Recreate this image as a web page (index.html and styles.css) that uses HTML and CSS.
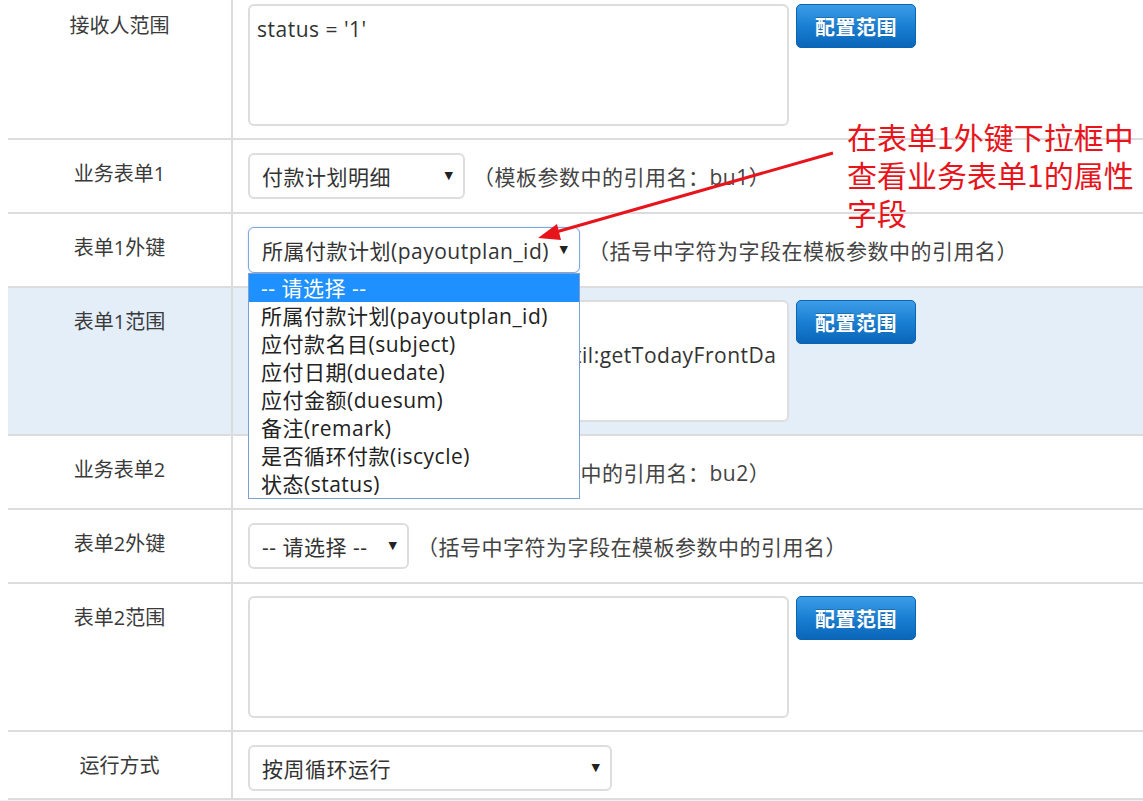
FILE: index.html
```html
<!DOCTYPE html>
<html lang="zh-CN">
<head>
<meta charset="utf-8">
<title>表单配置</title>
<link rel="stylesheet" href="styles.css">
</head>
<body>
<div class="page">
  <table class="form">
    <tr>
      <td class="label">接收人范围</td>
      <td class="value">
        <div class="area-row">
          <textarea class="area">status = '1'</textarea>
          <button class="btn">配置范围</button>
        </div>
      </td>
    </tr>
    <tr>
      <td class="label">业务表单1</td>
      <td class="value">
        <div class="sel-row">
          <div class="sel w217"><span>付款计划明细</span></div>
          <span class="hint">（模板参数中的引用名：bu1）</span>
        </div>
      </td>
    </tr>
    <tr>
      <td class="label">表单1外键</td>
      <td class="value">
        <div class="sel-row">
          <div class="sel w332 focus">
            <span>所属付款计划(payoutplan_id)</span>
            <ul class="menu">
              <li class="active">-- 请选择 --</li>
              <li>所属付款计划(payoutplan_id)</li>
              <li>应付款名目(subject)</li>
              <li>应付日期(duedate)</li>
              <li>应付金额(duesum)</li>
              <li>备注(remark)</li>
              <li>是否循环付款(iscycle)</li>
              <li>状态(status)</li>
            </ul>
          </div>
          <span class="hint">（括号中字符为字段在模板参数中的引用名）</span>
        </div>
      </td>
    </tr>
    <tr class="hl">
      <td class="label">表单1范围</td>
      <td class="value">
        <div class="area-row">
          <textarea class="area" wrap="off">iscycle = '1'
1 = '1' and duedate &lt;= ${DateUtil:getTodayFrontDa</textarea>
          <button class="btn">配置范围</button>
        </div>
      </td>
    </tr>
    <tr>
      <td class="label">业务表单2</td>
      <td class="value">
        <div class="sel-row">
          <div class="sel w217"><span>-- 请选择 --</span></div>
          <span class="hint">（模板参数中的引用名：bu2）</span>
        </div>
      </td>
    </tr>
    <tr>
      <td class="label">表单2外键</td>
      <td class="value">
        <div class="sel-row">
          <div class="sel w161"><span>-- 请选择 --</span></div>
          <span class="hint">（括号中字符为字段在模板参数中的引用名）</span>
        </div>
      </td>
    </tr>
    <tr>
      <td class="label">表单2范围</td>
      <td class="value">
        <div class="area-row">
          <textarea class="area"></textarea>
          <button class="btn">配置范围</button>
        </div>
      </td>
    </tr>
    <tr class="last">
      <td class="label">运行方式</td>
      <td class="value">
        <div class="sel-row">
          <div class="sel w364"><span>按周循环运行</span></div>
        </div>
      </td>
    </tr>
  </table>
  <div class="footer"></div>

  <svg class="arrow" width="1143" height="801" viewBox="0 0 1143 801">
    <line x1="833" y1="153" x2="556" y2="232" stroke="#e8141c" stroke-width="3"/>
    <polygon points="538,238 561,240 557,224" fill="#e8141c"/>
  </svg>
  <div class="note">在表单1外键下拉框中<br>查看业务表单1的属性<br>字段</div>
</div>
</body>
</html>
```
FILE: styles.css
```css
html, body {
  margin: 0;
  padding: 0;
  background: #fff;
  overflow: hidden;
}
body {
  font-family: "Open Sans", "Noto Sans CJK SC", sans-serif;
  color: #333;
  font-size: 20px;
}
.page {
  position: relative;
  width: 1143px;
  height: 801px;
  overflow: hidden;
}
.form {
  border-collapse: collapse;
  margin: -8px 0 0 8px;
  width: 1135px;
}
.form tr {
  border-bottom: 2px solid #dcdcdc;
}
.form tr.hl {
  background: #e3eef9;
}
.label {
  width: 223px;
  border-right: 2px solid #dcdcdc;
  text-align: center;
  vertical-align: top;
  padding: 20px 0 0 0;
  line-height: 28px;
  font-size: 20px;
  color: #3a3a3a;
}
.value {
  vertical-align: top;
  padding: 12px 0 12px 15px;
  font-size: 21px;
  letter-spacing: 0.5px;
}
.last .value {
  padding-bottom: 6px;
}
.area-row {
  display: flex;
  align-items: flex-start;
  gap: 7px;
}
.area {
  box-sizing: border-box;
  width: 541px;
  height: 122px;
  border: 2px solid #dddddd;
  border-radius: 6px;
  background: #fff;
  padding: 8px 7px;
  font-family: "Open Sans", "Noto Sans CJK SC", sans-serif;
  font-size: 21px;
  letter-spacing: 0.5px;
  line-height: 30px;
  color: #333;
  resize: none;
  overflow: hidden;
  margin: 0;
}
.btn {
  width: 120px;
  height: 44px;
  border: 1px solid #0b63b2;
  border-radius: 5px;
  background: linear-gradient(#3c9de8, #1a7fd2 50%, #0a66b8);
  color: #fff;
  font-family: "Noto Sans CJK SC", sans-serif;
  font-weight: bold;
  font-size: 20px;
  letter-spacing: 0.5px;
  padding: 0;
  text-shadow: 0 -1px 0 rgba(0,0,0,0.2);
}
.sel-row {
  display: flex;
  align-items: center;
  padding: 1px 0;
  gap: 8px;
}
.sel {
  position: relative;
  box-sizing: border-box;
  height: 46px;
  border: 2px solid #dddddd;
  border-radius: 6px;
  background: #fff;
  padding: 0 0 0 12px;
  display: flex;
  align-items: center;
  white-space: nowrap;
  color: #333;
}
.sel::after {
  content: "▼";
  position: absolute;
  right: 10px;
  top: 14px;
  font-size: 11px;
  color: #222;
  letter-spacing: 0;
  font-family: "DejaVu Sans", sans-serif;
}
.sel.focus {
  border: 1px solid #7ea6e0;
  padding-left: 13px;
  box-shadow: 0 0 2px rgba(120,160,220,0.4);
}
.sel.focus::after {
  right: 11px;
  top: 15px;
}
.w161 { width: 161px; }
.w217 { width: 217px; }
.w332 { width: 332px; }
.w364 { width: 364px; }
.hint {
  color: #444;
  white-space: nowrap;
}
.menu {
  position: absolute;
  left: -1px;
  top: 45px;
  width: 332px;
  box-sizing: border-box;
  margin: 0;
  padding: 0;
  list-style: none;
  background: #fff;
  border: 1px solid #7d9fd6;
  z-index: 5;
}
.menu li {
  height: 28px;
  line-height: 28px;
  padding-left: 12px;
  color: #222;
}
.menu li.active {
  background: #1e90ff;
  color: #fff;
}
.footer {
  height: 20px;
  background: #eef1f4;
}
.arrow {
  position: absolute;
  left: 0;
  top: 0;
  z-index: 6;
  pointer-events: none;
}
.note {
  position: absolute;
  left: 847px;
  top: 117px;
  z-index: 7;
  color: #e8141c;
  font-family: "Noto Sans CJK SC", sans-serif;
  font-size: 30px;
  line-height: 38px;
  white-space: nowrap;
}
```
